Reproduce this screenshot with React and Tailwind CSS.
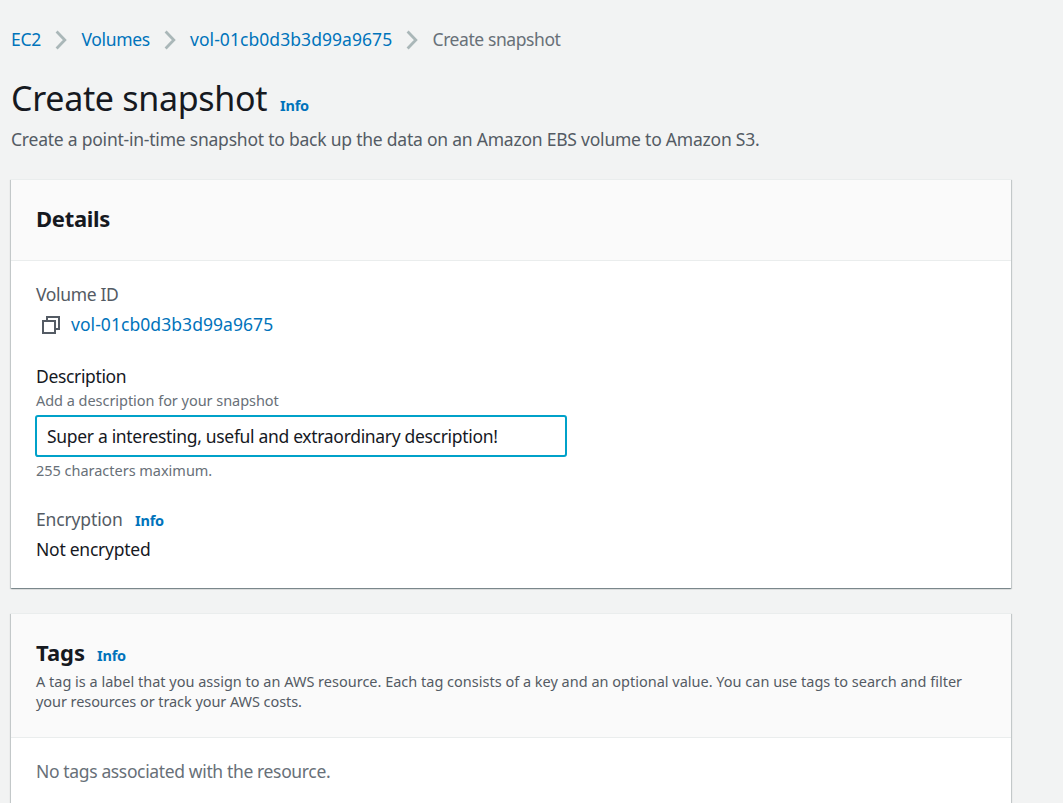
function Chevron() {
  return (
    <svg width="14" height="20" viewBox="0 0 14 20" fill="none" stroke="#aab7b8" strokeWidth="2.8" className="mt-0.5 mr-[12.5px] ml-[13px] shrink-0">
      <path d="M1.6 1.6 L9.8 10 L1.6 18.4" />
    </svg>
  );
}

function CopyIcon() {
  return (
    <svg width="20" height="20" viewBox="0 0 20 20" fill="none" stroke="#545b64" strokeWidth="2" className="shrink-0">
      <path d="M2 7h12v12H2z" />
      <path d="M6 7V3h12v12h-4" />
    </svg>
  );
}

function Info({ className }) {
  return (
    <a href="#" className={`text-[14.5px] font-bold tracking-[-0.2px] text-[#0073bb] ${className}`}>
      Info
    </a>
  );
}

function Card({ header, children }) {
  return (
    <section className="w-[1000px] border-t border-[#eaeded] bg-white shadow-[0_1px_1px_0_rgba(0,28,36,0.3),1px_1px_1px_0_rgba(0,28,36,0.15),-1px_1px_1px_0_rgba(0,28,36,0.15)]">
      <div className="border-b border-[#eaeded] bg-[#fafafa] px-[25px] pt-[23px]">{header}</div>
      {children}
    </section>
  );
}

export default function App() {
  return (
    <div className="h-[803px] overflow-hidden bg-[#f2f3f3] pt-6 pl-[11px] font-['Noto_Sans',sans-serif] text-[17.5px] text-[#16191f]">
      <nav className="flex h-[30px] items-center leading-[30px] whitespace-nowrap text-[#0073bb]">
        <a href="#" className="w-[31px] tracking-[-0.3px]">EC2</a>
        <Chevron />
        <a href="#" className="w-[69px] tracking-[-0.35px]">Volumes</a>
        <Chevron />
        <a href="#" className="w-[203px] tracking-[0.06px]">vol-01cb0d3b3d99a9675</a>
        <Chevron />
        <span className="tracking-[-0.42px] text-[#687078]">Create snapshot</span>
      </nav>

      <div className="mt-[22px] flex h-11 items-baseline leading-[44px]">
        <h1 className="w-[269px] text-[34px] tracking-[-0.3px] whitespace-nowrap">Create snapshot</h1>
        <Info className="" />
      </div>
      <p className="mt-1 mb-[25px] leading-[30px] tracking-[-0.225px] text-[#545b64]">
        Create a point-in-time snapshot to back up the data on an Amazon EBS volume to Amazon S3.
      </p>

      <Card header={<h2 className="pb-[27px] text-[22px] leading-[30px] font-bold tracking-[-0.3px]">Details</h2>}>
        <div className="px-[25px] pt-[18px] pb-6">
          <div className="leading-[30px] tracking-[-0.35px] text-[#545b64]">Volume ID</div>
          <div className="flex items-center gap-[10px] pl-[5px] leading-[30px]">
            <CopyIcon />
            <a href="#" className="tracking-[0.06px] text-[#0073bb]">vol-01cb0d3b3d99a9675</a>
          </div>

          <label htmlFor="description" className="mt-[25px] block leading-6 tracking-[-0.35px]">Description</label>
          <div className="mt-0.5 text-[14.5px] leading-5 tracking-[-0.04px] text-[#687078]">Add a description for your snapshot</div>
          <input
            id="description"
            defaultValue="Super a interesting, useful and extraordinary description!"
            className="mt-[5px] -ml-px block h-[42px] w-[532px] rounded-[3px] border-2 border-[#00a1c9] bg-white px-[10px] pb-px tracking-[-0.32px] outline-none"
          />
          <div className="mt-[3px] text-[14.5px] leading-5 tracking-[-0.02px] text-[#687078]">255 characters maximum.</div>

          <div className="mt-6 flex h-[30px] items-baseline leading-[30px]">
            <span className="w-[99px] tracking-[-0.15px] text-[#545b64]">Encryption</span>
            <Info className="" />
          </div>
          <div className="leading-[30px] tracking-[-0.25px]">Not encrypted</div>
        </div>
      </Card>

      <div className="h-[25px]" />

      <Card
        header={
          <>
            <div className="flex h-[30px] items-baseline leading-[30px]">
              <h2 className="w-[61px] text-[22px] font-bold">Tags</h2>
              <Info className="" />
            </div>
            <p className="mt-[4px] pb-[26px] text-[14.5px] leading-5 whitespace-nowrap text-[#545b64]">
              A tag is a label that you assign to an AWS resource. Each tag consists of a key and an optional value. You can use tags to search and filter
              <br />
              <span className="tracking-[-0.07px]">your resources or track your AWS costs.</span>
            </p>
          </>
        }
      >
        <div className="px-[25px] pt-[18px] pb-6 leading-[30px] tracking-[-0.36px] text-[#687078]">
          No tags associated with the resource.
        </div>
      </Card>
    </div>
  );
}
